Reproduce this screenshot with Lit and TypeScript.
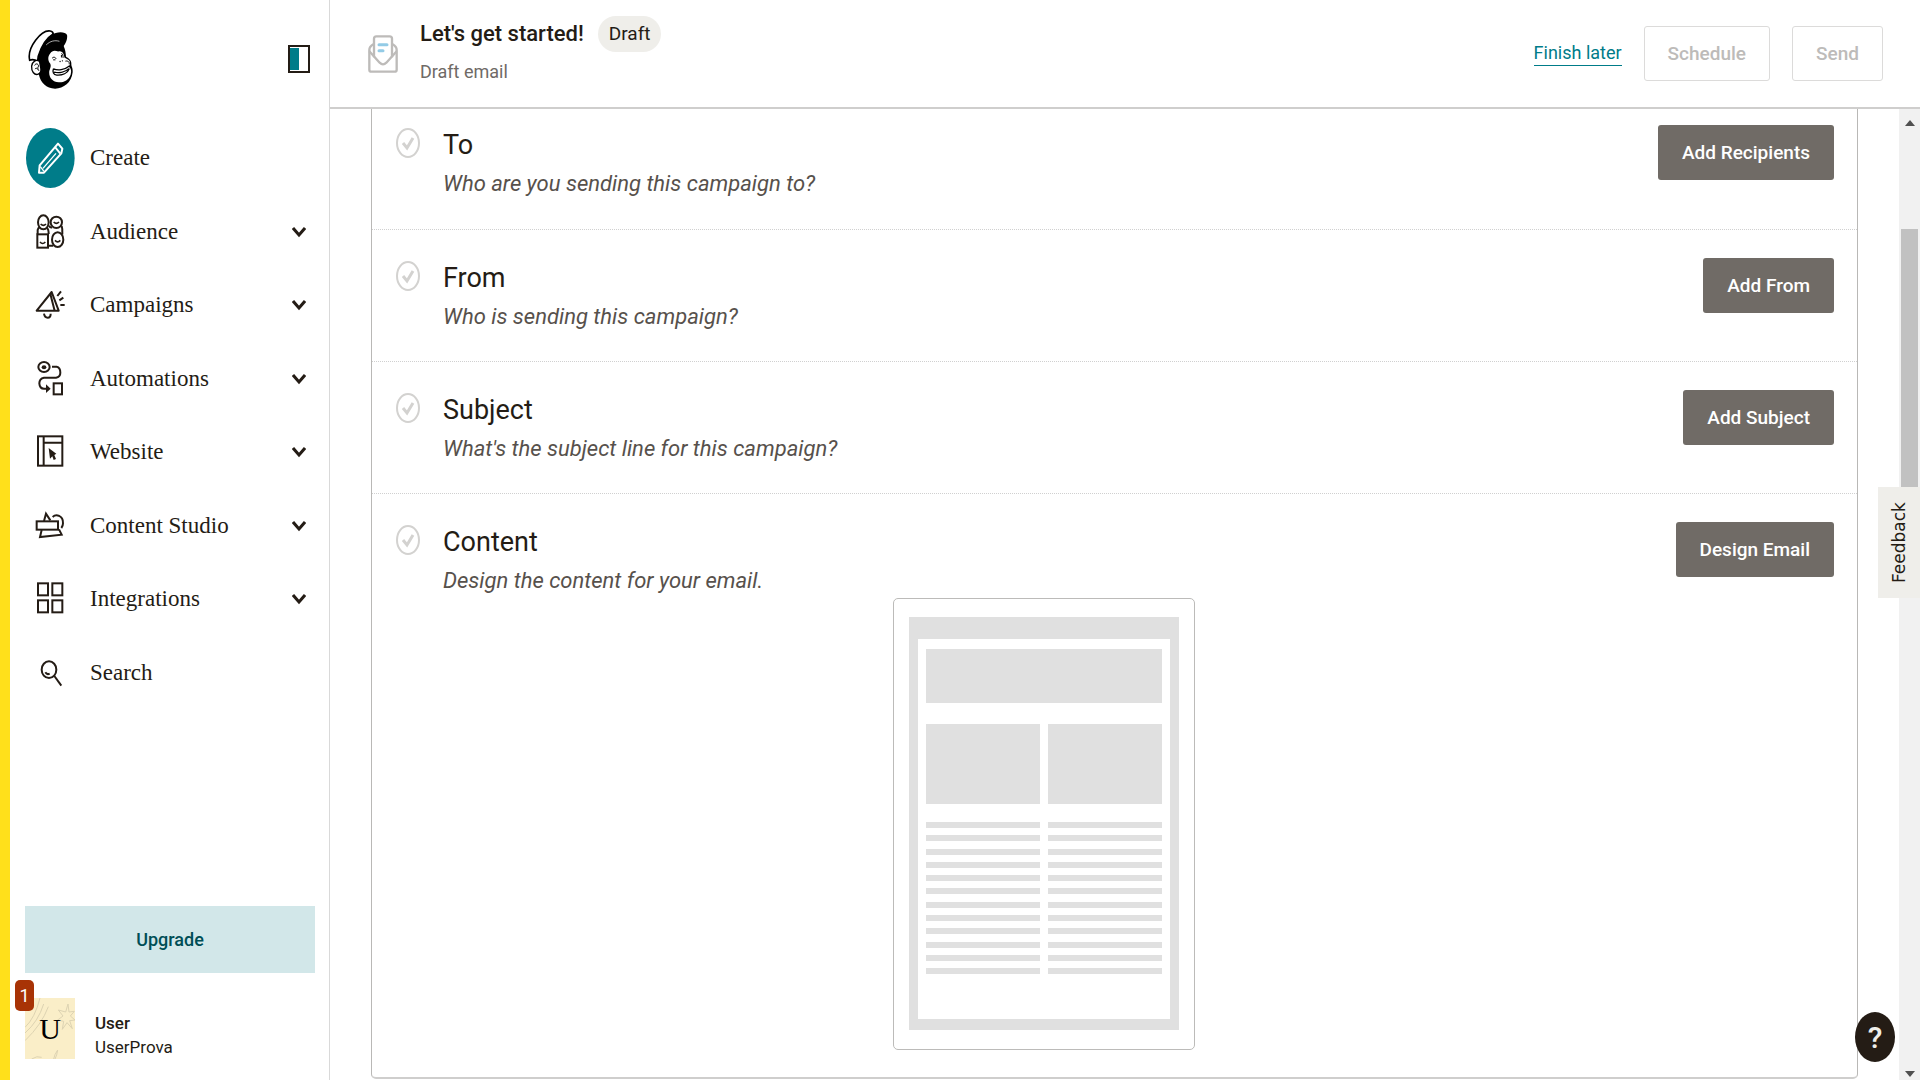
import { LitElement, html, svg, css } from "lit";
import { customElement } from "lit/decorators.js";

interface NavItem {
  label: string;
  icon: unknown;
  expandable: boolean;
}

interface Step {
  title: string;
  hint: string;
  action: string;
  preview?: boolean;
}

const audienceIcon = html`<svg class="icon" viewBox="105 637 90 114" aria-hidden="true">
  <g fill="none" stroke="#241c15" stroke-width="6">
    <ellipse cx="130" cy="665" rx="16" ry="21" />
    <ellipse cx="169" cy="665" rx="17" ry="17" />
    <rect x="112" y="701" width="32" height="40" />
    <ellipse cx="173" cy="717" rx="17" ry="22" />
    <path d="M113 701 V688 Q114 681 120 679 M141 682 Q146 686 146 700 M147 675 Q151 682 156 680 M185 676 Q188 684 187 701 M146 735 H160" />
    <path d="M122 670 Q130 678 138 670 M161 664 Q169 672 177 664 M120 724 Q128 733 136 724 M165 719 Q173 728 181 719" stroke-width="5" />
  </g>
</svg>`;

const campaignsIcon = html`<svg class="icon" viewBox="105 860 90 114" aria-hidden="true">
  <g fill="none" stroke="#241c15" stroke-width="6" stroke-linejoin="round">
    <path d="M155 878 L110 934 H176 Z M151 884 L164 934" />
    <path d="M132 943 Q134 955 143 955 Q152 955 152 943" />
    <path d="M172 890 L183 876 M178 903 L190 895 M181 917 H194" />
  </g>
</svg>`;

const automationsIcon = html`<svg class="icon" viewBox="105 60 90 114" aria-hidden="true">
  <g fill="none" stroke="#241c15" stroke-width="6">
    <ellipse cx="132" cy="81" rx="17" ry="15" />
    <path d="M156 80 H170 Q181 82 181 98 Q181 111 168 113 H132 Q118 116 118 130 Q119 146 132 146 H142" />
    <rect x="161" y="130" width="25" height="33" />
  </g>
  <ellipse cx="132" cy="82" rx="7" ry="6" fill="#241c15" />
  <path d="M138 133 L152 146 L138 159 Z" fill="#241c15" />
</svg>`;

const websiteIcon = html`<svg class="icon" viewBox="105 280 90 114" aria-hidden="true">
  <g fill="none" stroke="#241c15" stroke-width="6">
    <rect x="114" y="290" width="73" height="88" />
    <path d="M131 290 V378 M131 309 H187" />
  </g>
  <path d="M146 325 L169 342 L163 346 L168 358 L161 361 L157 350 L150 357 Z" fill="#241c15" />
</svg>`;

const contentIcon = html`<svg class="icon" viewBox="105 501 90 114" aria-hidden="true">
  <g fill="none" stroke="#241c15" stroke-width="6">
    <rect x="110" y="544" width="64" height="25" />
    <path d="M132 543 L138 521 L151 541 M125 570 L120 591 L185 584 L177 568" />
    <path d="M158 531 Q165 524 176 527 Q190 533 189 550 Q189 558 184 564" />
  </g>
</svg>`;

const integrationsIcon = html`<svg class="icon" viewBox="105 721 90 114" aria-hidden="true">
  <g fill="none" stroke="#241c15" stroke-width="6">
    <rect x="114" y="731" width="30" height="36" />
    <rect x="157" y="731" width="30" height="36" />
    <rect x="114" y="782" width="30" height="36" />
    <rect x="157" y="782" width="30" height="36" />
  </g>
</svg>`;

const searchIcon = html`<svg class="icon" viewBox="105 942 90 114" aria-hidden="true">
  <g fill="none" stroke="#241c15" stroke-width="6">
    <ellipse cx="147" cy="989" rx="22" ry="25" />
    <path d="M163 1008 L184 1037" />
    <path d="M136 997 Q141 1005 149 1001" />
  </g>
</svg>`;

const pencilIcon = html`<svg class="create-icon" viewBox="78 385 147 180" aria-hidden="true">
  <ellipse cx="151" cy="475" rx="73" ry="90" fill="#007c89" />
  <g fill="none" stroke="#fff" stroke-width="6" stroke-linejoin="round">
    <path d="M174 432 L187 447 L184 461 L132 519 L117 519 L119 497 Z" />
    <path d="M165 442 L181 462" />
    <path d="M121 501 L132 515 M129 506 L168 461" stroke-width="4" />
  </g>
</svg>`;

const chevron = html`<svg class="chevron" viewBox="0 0 14 12" aria-hidden="true">
  <path d="M1 2 L7 9 L13 2" fill="none" stroke="#241c15" stroke-width="3" />
</svg>`;

const logo = html`<svg class="logo" viewBox="80 84 142 184" role="img" aria-label="Mailchimp">
  <path d="M118 148 C122 126 138 106 160 97 L190 134 C196 146 197 158 198 168 C207 173 215 180 214 191 C214 197 219 201 218 214 C215 246 190 264 165 264 C138 263 121 246 116 222 C110 196 112 168 118 148 Z" fill="#000" />
  <path d="M88 178 C83 156 94 134 106 118 C118 102 136 88 150 90 C156 91 159 95 159 99 C138 112 124 134 114 166 L112 182 C104 176 94 176 88 178 Z" fill="#fff" stroke="#000" stroke-width="5" />
  <path d="M154 102 C168 91 196 90 201 102 C203 114 197 128 189 138 C178 130 160 132 146 142 L128 138 C134 124 142 110 154 102 Z" fill="#000" />
  <path d="M138 132 C150 120 164 117 178 121" fill="none" stroke="#fff" stroke-width="2" />
  <path d="M150 158 C156 147 166 148 174 152 C184 148 191 154 193 170 C199 174 210 176 210 186 C210 192 206 195 207 199 C213 204 215 210 212 221 C207 238 190 246 176 245 C158 244 147 231 147 215 C147 206 155 198 150 188 C143 181 142 167 150 158 Z" fill="#fff" />
  <path d="M160 204 C172 210 194 208 208 196 M160 204 C156 214 160 222 170 223 C187 224 203 217 208 203 M162 214 C178 218 196 213 206 204" fill="none" stroke="#000" stroke-width="4" />
  <path d="M196 181 C203 179 210 184 207 190 M156 172 C160 167 166 169 168 174 M159 177 H166 M184 158 C188 158 189 164 189 171 M184 162 V170" fill="none" stroke="#000" stroke-width="3" />
  <circle cx="180" cy="182" r="2" />
  <circle cx="187" cy="180" r="2" />
  <path d="M118 182 C108 174 96 182 94 196 C93 212 102 223 112 221 C119 219 123 212 122 204 Z" fill="#fff" stroke="#000" stroke-width="4" />
  <path d="M103 194 C106 187 114 188 115 196 C111 200 113 206 116 210 M104 205 C107 201 111 202 112 206" fill="none" stroke="#000" stroke-width="3" />
</svg>`;

const envelope = html`<svg class="envelope" viewBox="84 101 90 114" aria-hidden="true">
  <g fill="none" stroke="#bdbbb9" stroke-width="7" stroke-linejoin="round">
    <path d="M102 168 V112 Q102 105 109 105 H149 Q156 105 156 112 V168" />
    <path d="M100 129 Q88 136 88 146 V205 Q88 211 95 211 H163 Q170 211 170 205 V146 Q170 136 158 129" />
    <path d="M88 150 L119 184 Q129 194 139 184 L170 150" />
  </g>
  <path d="M117 130 H141 M117 148 H129" stroke="#93cbe6" stroke-width="9" stroke-linecap="round" />
</svg>`;

const checkIcon = html`<svg class="check" viewBox="0 0 26 32" aria-hidden="true">
  <ellipse cx="13" cy="16" rx="11" ry="14" fill="none" stroke="#d3d2d0" stroke-width="2" />
  <path d="M8 16 L12 21 L18 11" fill="none" stroke="#d3d2d0" stroke-width="3" />
</svg>`;

const NAV: NavItem[] = [
  { label: "Create", icon: pencilIcon, expandable: false },
  { label: "Audience", icon: audienceIcon, expandable: true },
  { label: "Campaigns", icon: campaignsIcon, expandable: true },
  { label: "Automations", icon: automationsIcon, expandable: true },
  { label: "Website", icon: websiteIcon, expandable: true },
  { label: "Content Studio", icon: contentIcon, expandable: true },
  { label: "Integrations", icon: integrationsIcon, expandable: true },
  { label: "Search", icon: searchIcon, expandable: false },
];

const STEPS: Step[] = [
  { title: "To", hint: "Who are you sending this campaign to?", action: "Add Recipients" },
  { title: "From", hint: "Who is sending this campaign?", action: "Add From" },
  { title: "Subject", hint: "What's the subject line for this campaign?", action: "Add Subject" },
  { title: "Content", hint: "Design the content for your email.", action: "Design Email", preview: true },
];

const sans = css`"Roboto", "Liberation Sans", sans-serif`;

@customElement("side-nav")
export class SideNav extends LitElement {
  static styles = css`
    :host {
      display: flex;
      flex-direction: column;
      box-sizing: border-box;
      width: 330px;
      flex: none;
      border-left: 10px solid #ffe01b;
      border-right: 1px solid #d9d9d9;
      background: #fff;
      font-family: ${sans};
      color: #241c15;
    }
    button {
      font: inherit;
      color: inherit;
      border: 0;
      background: none;
      padding: 0;
      cursor: pointer;
    }
    .top {
      display: flex;
      justify-content: space-between;
      align-items: center;
      height: 121px;
      box-sizing: border-box;
      padding: 0 19px 3px 17px;
    }
    .logo {
      display: block;
      width: 47px;
      height: 61px;
    }
    .toggle svg {
      display: block;
      width: 22px;
      height: 28px;
    }
    .items {
      display: grid;
      grid-auto-rows: 74px 73px;
      list-style: none;
      margin: 0;
      padding: 0;
    }
    .item {
      display: grid;
      grid-template-columns: 48px 1fr 14px;
      column-gap: 16px;
      align-items: center;
      width: 100%;
      height: 100%;
      padding: 0 23px 0 16px;
      font-family: "Liberation Serif", serif;
      font-size: 23px;
      line-height: 30px;
      text-align: left;
    }
    .icon {
      width: 30px;
      height: 38px;
      justify-self: center;
    }
    .create-icon {
      width: 49px;
      height: 60px;
    }
    .chevron {
      width: 14px;
      height: 12px;
    }
    .spacer {
      flex: 1;
    }
    .upgrade {
      height: 67px;
      margin: 0 14px 0 15px;
      background: #d2e7e9;
      color: #004e56;
      font-size: 18px;
      font-weight: 500;
    }
    .account {
      display: flex;
      align-items: center;
      gap: 20px;
      margin: 25px 14px 21px 15px;
      text-align: left;
    }
    .avatar {
      position: relative;
      display: grid;
      place-items: center;
      width: 50px;
      height: 61px;
      background: #faeec8;
      font-family: "Liberation Serif", serif;
      font-size: 30px;
      color: #000;
    }
    .sketch {
      position: absolute;
      inset: 0;
      width: 50px;
      height: 61px;
    }
    .letter {
      position: relative;
    }
    .badge {
      position: absolute;
      left: -10px;
      top: -18px;
      width: 19px;
      height: 31px;
      border-radius: 5px;
      background: #a83306;
      color: #fff;
      font-family: ${sans};
      font-size: 18px;
      line-height: 31px;
      text-align: center;
    }
    .names {
      display: flex;
      flex-direction: column;
      font-size: 17px;
      line-height: 24px;
      padding-top: 12px;
    }
    .name {
      font-weight: 500;
    }
  `;

  render() {
    return html`
      <div class="top">
        ${logo}
        <button class="toggle" aria-label="Collapse navigation">
          <svg viewBox="0 0 22 28">
            <rect x="1" y="1" width="20" height="26" fill="#fff" stroke="#241c15" stroke-width="2" />
            <rect x="2" y="3" width="9" height="22" fill="#007c89" />
          </svg>
        </button>
      </div>
      <nav>
        <ul class="items">
          ${NAV.map(
            (n) => html`<li>
              <button class="item">
                ${n.icon}<span>${n.label}</span>${n.expandable ? chevron : ""}
              </button>
            </li>`
          )}
        </ul>
      </nav>
      <div class="spacer"></div>
      <button class="upgrade">Upgrade</button>
      <button class="account">
        <span class="avatar">
          <svg class="sketch" viewBox="0 0 150 183" preserveAspectRatio="none" aria-hidden="true">
            <g fill="none" stroke="#ddd3b2" stroke-width="3">
              <path d="M0 88 Q30 60 45 0 M0 105 Q40 70 56 18 M0 128 Q50 80 70 26" />
              <path d="M129 18 L132 42 L148 40 L136 54 L150 66 L134 68 L142 92 L126 74 L112 94 L116 70 L98 66 L114 54 L100 36 L122 42 Z" />
              <path d="M20 183 Q36 172 50 178 M86 183 Q88 170 98 156 M90 183 Q96 172 98 156" />
            </g>
          </svg>
          <span class="letter">U</span>
          <span class="badge">1</span>
        </span>
        <span class="names"><span class="name">User</span><span>UserProva</span></span>
      </button>
    `;
  }
}

@customElement("campaign-header")
export class CampaignHeader extends LitElement {
  static styles = css`
    :host {
      display: flex;
      align-items: center;
      box-sizing: border-box;
      height: 109px;
      flex: none;
      padding: 0 37px 0 38px;
      border-bottom: 2px solid #cfcecd;
      font-family: ${sans};
      font-size: 18px;
      color: #241c15;
    }
    .envelope {
      width: 30px;
      height: 38px;
      margin-right: 22px;
      flex: none;
    }
    .titles {
      flex: 1;
      padding-bottom: 4px;
    }
    .row {
      display: flex;
      align-items: center;
      gap: 14px;
    }
    h1 {
      margin: 0;
      font-size: 22px;
      line-height: 34px;
      font-weight: 500;
    }
    .pill {
      padding: 0 11px;
      border-radius: 18px;
      background: #efeeea;
      font-size: 19px;
      line-height: 36px;
    }
    .sub {
      margin: 4px 0 0;
      line-height: 32px;
      color: #6f6a66;
    }
    .actions {
      display: flex;
      align-items: center;
      gap: 22px;
    }
    a {
      color: #007c89;
      text-decoration: none;
      line-height: 24px;
      border-bottom: 1px solid #007c89;
    }
    button {
      height: 55px;
      padding: 0 23px;
      border: 1px solid #dcdbda;
      border-radius: 3px;
      background: #fff;
      color: #bdbbb9;
      font: 500 19px ${sans};
    }
  `;

  render() {
    return html`
      ${envelope}
      <div class="titles">
        <div class="row"><h1>Let's get started!</h1><span class="pill">Draft</span></div>
        <p class="sub">Draft email</p>
      </div>
      <div class="actions">
        <a href="#later">Finish later</a>
        <button disabled>Schedule</button>
        <button disabled>Send</button>
      </div>
    `;
  }
}

@customElement("campaign-checklist")
export class CampaignChecklist extends LitElement {
  static styles = css`
    :host {
      display: flex;
      flex: 1;
      min-width: 0;
      box-sizing: border-box;
      padding: 0 41px 1px 41px;
      font-family: ${sans};
      color: #241c15;
    }
    .card {
      flex: 1;
      display: flex;
      flex-direction: column;
      border: 1px solid #b9b8b6;
      border-top: 0;
      border-bottom: 2px solid #cfcecd;
      border-radius: 0 0 5px 5px;
    }
    .step {
      display: grid;
      grid-template-columns: 26px 1fr auto;
      column-gap: 22px;
      align-items: start;
      box-sizing: border-box;
      min-height: 132px;
      padding: 28px 23px 0;
      border-bottom: 1px dotted #d0d0d0;
    }
    .step:first-child {
      min-height: 121px;
      padding-top: 16px;
    }
    .step:last-child {
      border-bottom: 0;
    }
    .text {
      padding-right: 8px;
    }
    .check {
      width: 26px;
      height: 32px;
      margin-top: 2px;
    }
    h2 {
      margin: 2px 0 0;
      font-size: 27px;
      line-height: 36px;
      font-weight: 400;
    }
    .hint {
      margin: 2px 0 0;
      font-size: 22px;
      line-height: 38px;
      font-style: italic;
      color: #57514c;
    }
    .action {
      height: 55px;
      padding: 0 24px;
      border: 0;
      border-radius: 3px;
      background: #706b66;
      color: #fff;
      font: 500 19px ${sans};
      cursor: pointer;
    }
    .preview {
      display: block;
      width: fit-content;
      margin: -2px auto 0;
      padding: 18px 15px;
      border: 1px solid #bcbbb9;
      border-radius: 5px;
    }
    .preview svg {
      display: block;
      width: 270px;
      height: 414px;
    }
  `;

  private preview() {
    const lines = Array.from({ length: 12 }, (_, i) => 205 + Math.round((i * 40 - i / 6) / 3));
    return html`<div class="preview">
      <svg viewBox="0 0 270 414" role="img" aria-label="Email layout preview">
        <rect width="270" height="413" fill="#e0e0e0" />
        <rect x="9" y="22" width="252" height="380" fill="#fff" />
        <g fill="#e0e0e0">
          <rect x="17" y="32" width="236" height="54" />
          <rect x="17" y="107" width="114" height="80" />
          <rect x="139" y="107" width="114" height="80" />
          ${lines.map(
            (y) => svg`<rect x="17" y=${y} width="114" height="6" /><rect x="139" y=${y} width="114" height="6" />`
          )}
        </g>
      </svg>
    </div>`;
  }

  render() {
    return html`<div class="card">
      ${STEPS.map(
        (s) => html`<section class="step">
          ${checkIcon}
          <div class="text">
            <h2>${s.title}</h2>
            <p class="hint">${s.hint}</p>
            ${s.preview ? this.preview() : ""}
          </div>
          <button class="action">${s.action}</button>
        </section>`
      )}
    </div>`;
  }
}

@customElement("app-root")
export class AppRoot extends LitElement {
  static styles = css`
    :host {
      display: flex;
      position: relative;
      height: 100vh;
      overflow: hidden;
      background: #fff;
    }
    main {
      flex: 1;
      min-width: 0;
      display: flex;
      flex-direction: column;
    }
    .body {
      flex: 1;
      min-height: 0;
      display: flex;
    }
    .scrollbar {
      display: grid;
      grid-template-rows: 120px 260px 1fr;
      justify-items: center;
      width: 21px;
      flex: none;
      background: #f1f1f1;
    }
    .scrollbar svg {
      width: 10px;
      height: 6px;
      fill: #505050;
    }
    .up {
      margin-top: 11px;
    }
    .thumb {
      width: 17px;
      background: #c1c1c1;
    }
    .down {
      align-self: end;
      margin-bottom: 3px;
    }
    .feedback {
      position: absolute;
      right: 0;
      top: 487px;
      width: 42px;
      height: 111px;
      padding: 0;
      border: 0;
      background: #efeeea;
      color: #241c15;
      font: 17px "DejaVu Sans", sans-serif;
      writing-mode: vertical-rl;
      transform: rotate(180deg);
      text-align: center;
    }
    .help {
      position: absolute;
      right: 25px;
      bottom: 18px;
      width: 40px;
      height: 50px;
      padding: 0;
      border: 0;
      border-radius: 50%;
      background: #241c15;
      color: #efeeea;
      font: 500 30px ${sans};
    }
  `;

  render() {
    return html`
      <side-nav></side-nav>
      <main>
        <campaign-header></campaign-header>
        <div class="body">
          <campaign-checklist></campaign-checklist>
          <div class="scrollbar" aria-hidden="true">
            <svg class="up" viewBox="0 0 10 6"><path d="M0 6 L5 0 L10 6 Z" /></svg>
            <div class="thumb"></div>
            <svg class="down" viewBox="0 0 10 6"><path d="M0 0 L5 6 L10 0 Z" /></svg>
          </div>
        </div>
      </main>
      <button class="feedback">Feedback</button>
      <button class="help" aria-label="Help">?</button>
    `;
  }
}
